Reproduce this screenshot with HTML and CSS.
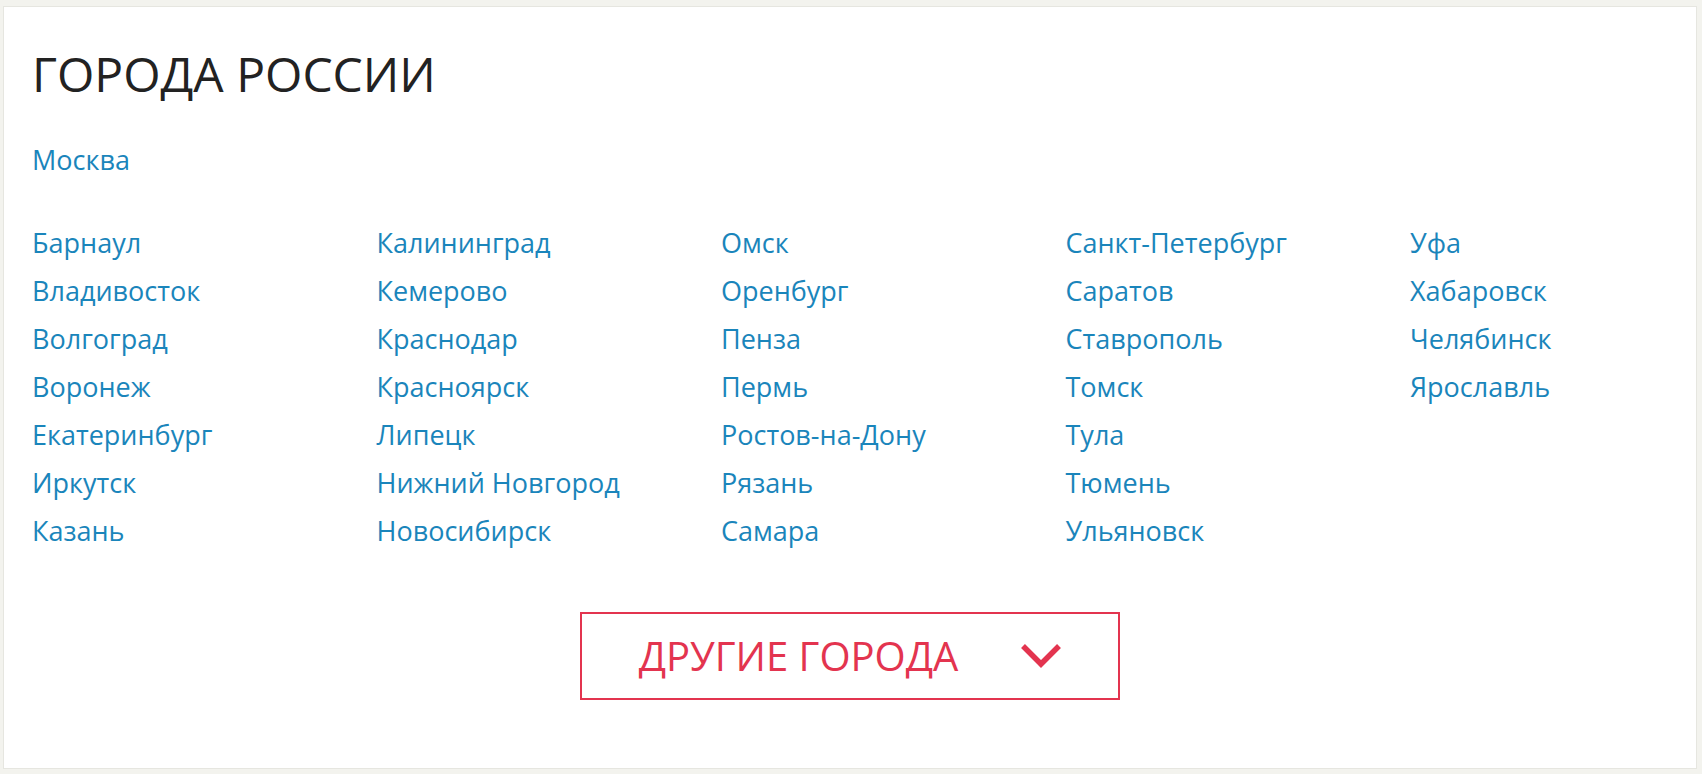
FILE: index.html
```html
<!DOCTYPE html>
<html lang="ru">
<head>
<meta charset="utf-8">
<title>Города России</title>
<link rel="stylesheet" href="styles.css">
</head>
<body>
<section class="card">
  <h1 class="title">ГОРОДА РОССИИ</h1>
  <div class="capital"><a href="#" class="city">Москва</a></div>
  <div class="cities">
    <ul class="col">
      <li><a href="#" class="city">Барнаул</a></li>
      <li><a href="#" class="city">Владивосток</a></li>
      <li><a href="#" class="city">Волгоград</a></li>
      <li><a href="#" class="city">Воронеж</a></li>
      <li><a href="#" class="city">Екатеринбург</a></li>
      <li><a href="#" class="city">Иркутск</a></li>
      <li><a href="#" class="city">Казань</a></li>
    </ul>
    <ul class="col">
      <li><a href="#" class="city">Калининград</a></li>
      <li><a href="#" class="city">Кемерово</a></li>
      <li><a href="#" class="city">Краснодар</a></li>
      <li><a href="#" class="city">Красноярск</a></li>
      <li><a href="#" class="city">Липецк</a></li>
      <li><a href="#" class="city">Нижний Новгород</a></li>
      <li><a href="#" class="city">Новосибирск</a></li>
    </ul>
    <ul class="col">
      <li><a href="#" class="city">Омск</a></li>
      <li><a href="#" class="city">Оренбург</a></li>
      <li><a href="#" class="city">Пенза</a></li>
      <li><a href="#" class="city">Пермь</a></li>
      <li><a href="#" class="city">Ростов-на-Дону</a></li>
      <li><a href="#" class="city">Рязань</a></li>
      <li><a href="#" class="city">Самара</a></li>
    </ul>
    <ul class="col">
      <li><a href="#" class="city">Санкт-Петербург</a></li>
      <li><a href="#" class="city">Саратов</a></li>
      <li><a href="#" class="city">Ставрополь</a></li>
      <li><a href="#" class="city">Томск</a></li>
      <li><a href="#" class="city">Тула</a></li>
      <li><a href="#" class="city">Тюмень</a></li>
      <li><a href="#" class="city">Ульяновск</a></li>
    </ul>
    <ul class="col">
      <li><a href="#" class="city">Уфа</a></li>
      <li><a href="#" class="city">Хабаровск</a></li>
      <li><a href="#" class="city">Челябинск</a></li>
      <li><a href="#" class="city">Ярославль</a></li>
    </ul>
  </div>
  <div class="more-wrap">
    <button class="more" type="button">
      <span class="more-label">ДРУГИЕ ГОРОДА</span>
      <svg class="chevron" width="42" height="28" viewBox="0 0 42 28" aria-hidden="true">
        <polyline points="3,4 21,22 39,4" fill="none" stroke="#e3344f" stroke-width="5.5"/>
      </svg>
    </button>
  </div>
</section>
</body>
</html>
```

FILE: styles.css
```css
html, body {
  margin: 0;
  padding: 0;
}
body {
  background: #f3f3ee;
  padding: 6px 5px 5px 3px;
  font-family: "Open Sans", "Noto Sans", sans-serif;
}
.card {
  background: #ffffff;
  border: 1px solid #e6e6e0;
  height: 763px;
  box-sizing: border-box;
  padding: 37px 26px 0 28px;
  overflow: hidden;
}
.title {
  margin: 0;
  font-size: 48px;
  line-height: 60px;
  font-weight: 400;
  color: #222222;
}
.capital {
  margin-top: 32px;
  font-size: 27px;
  line-height: 48px;
}
.city {
  color: #1a85bb;
  text-decoration: none;
}
.cities {
  margin-top: 35px;
  display: grid;
  grid-template-columns: repeat(4, 344.5px) 1fr;
}
.col {
  list-style: none;
  margin: 0;
  padding: 0;
  font-size: 27px;
  line-height: 48px;
}
.more-wrap {
  margin-top: 57px;
  display: flex;
  justify-content: center;
  padding-right: 3px;
}
.more {
  width: 540px;
  height: 88px;
  box-sizing: border-box;
  border: 2px solid #e3344f;
  background: #fff;
  display: flex;
  align-items: center;
  justify-content: center;
  gap: 62px;
  padding: 0 0 0 2px;
  font-family: "Open Sans", "Noto Sans", sans-serif;
  font-size: 40px;
  color: #e3344f;
  cursor: pointer;
}
.more-label {
  line-height: 1;
}
.chevron {
  display: block;
  filter: blur(0.6px);
}
```
